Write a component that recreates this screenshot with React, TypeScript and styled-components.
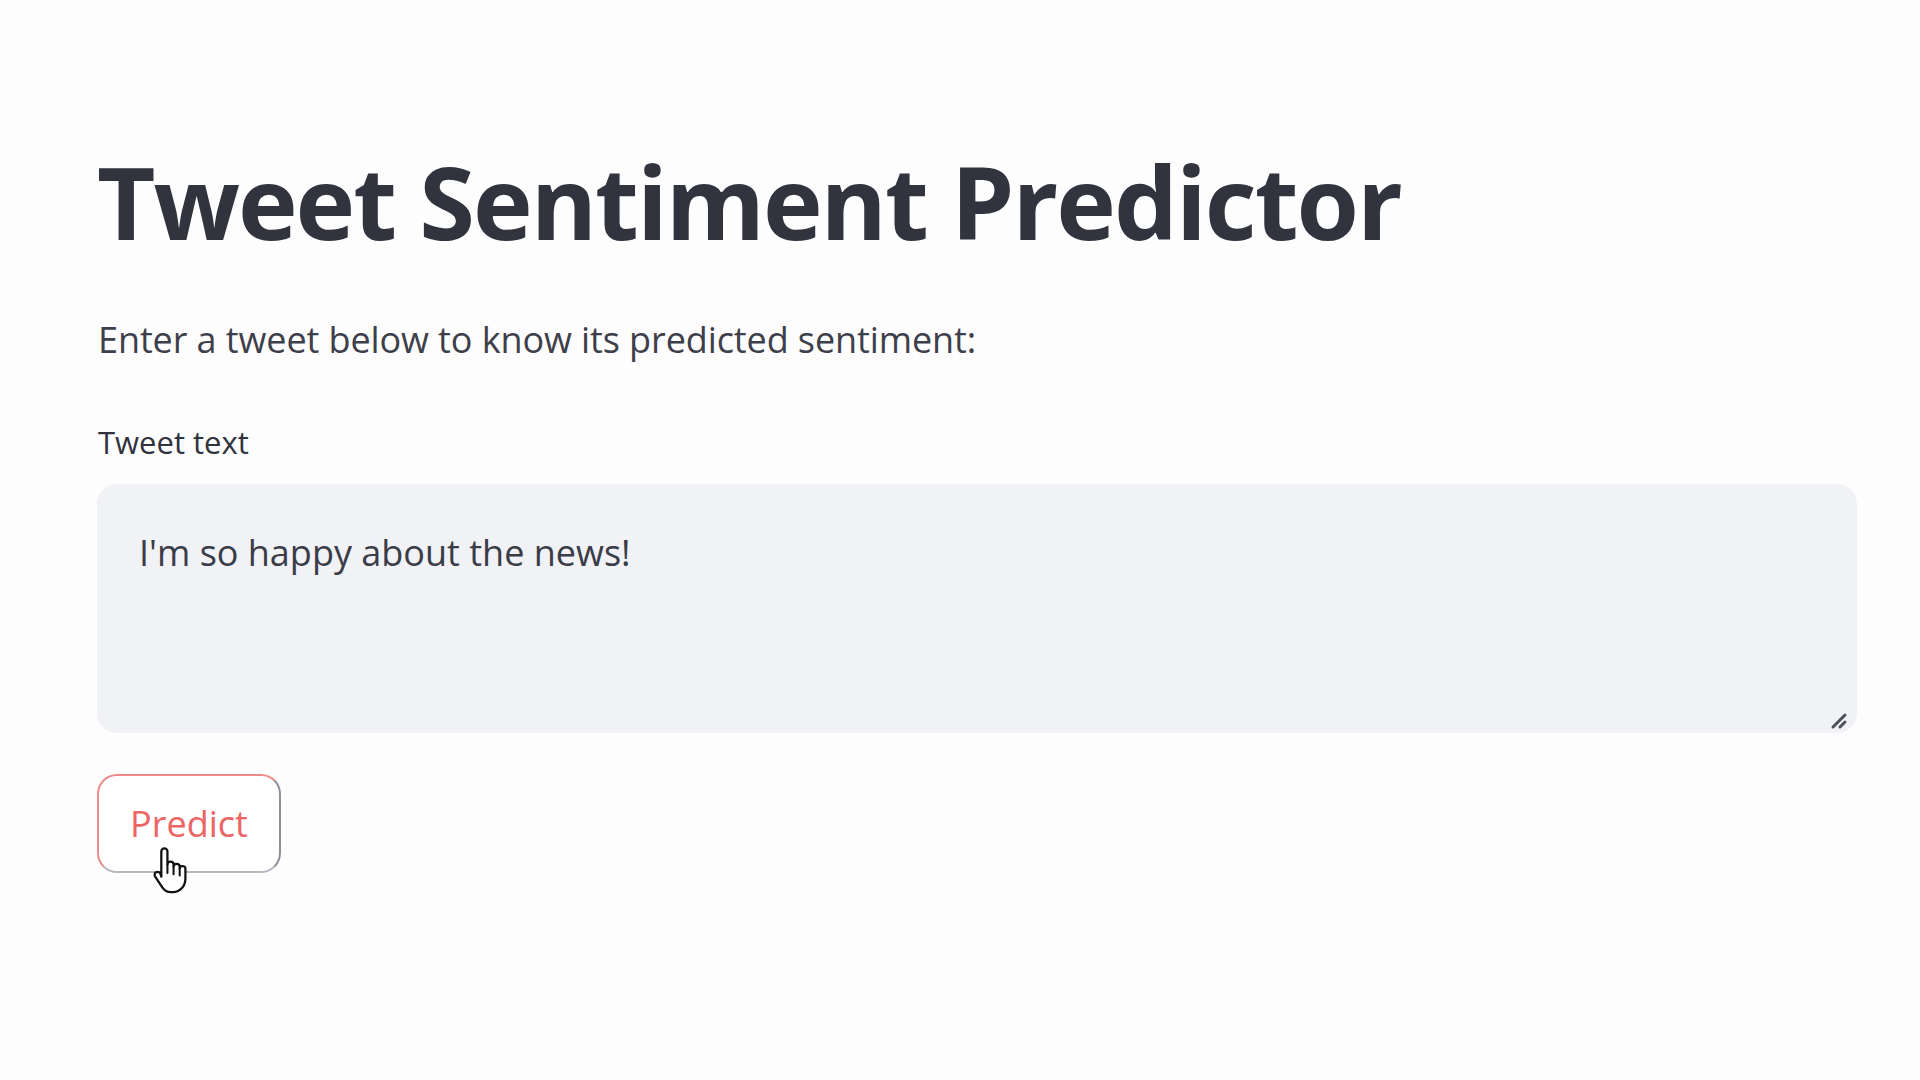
import React from "react";
import styled, { createGlobalStyle } from "styled-components";

const GlobalStyle = createGlobalStyle`
  html, body {
    margin: 0;
    padding: 0;
    background: #fdfdfd;
  }
  body {
    font-family: "Open Sans", "Noto Sans", sans-serif;
    color: #31333f;
  }
`;

const Main = styled.main`
  display: flex;
  flex-direction: column;
  align-items: stretch;
  padding: 141px 63px 0 97px;
  min-height: 1080px;
  box-sizing: border-box;
`;

const Title = styled.h1`
  margin: 0 0 47px 0;
  font-family: "Open Sans", sans-serif;
  font-weight: 700;
  font-size: 101px;
  line-height: 120px;
  letter-spacing: -2px;
  color: #31333f;
`;

const Lead = styled.p`
  margin: 0 0 50px 1px;
  font-size: 36px;
  line-height: 64px;
  letter-spacing: -0.1px;
  color: #3d3f4a;
`;

const Label = styled.label`
  display: block;
  margin: 0 0 22px 1px;
  font-size: 31px;
  line-height: 40px;
  color: #31333f;
`;

const AreaWrap = styled.div`
  position: relative;
  height: 249px;
  margin-bottom: 41px;
`;

const TextArea = styled.textarea`
  display: block;
  width: 100%;
  height: 100%;
  box-sizing: border-box;
  border: none;
  outline: none;
  resize: none;
  border-radius: 20px;
  background: #f0f2f6;
  padding: 37px 40px 0 42px;
  font-family: "Open Sans", sans-serif;
  font-size: 36px;
  line-height: 64px;
  color: #3a3c47;
`;

const Grip = styled.svg`
  position: absolute;
  right: 5px;
  bottom: 1px;
  width: 24px;
  height: 24px;
`;

const ButtonRow = styled.div`
  position: relative;
  display: flex;
`;

const PredictButton = styled.button`
  width: 184px;
  height: 99px;
  box-sizing: border-box;
  border-radius: 20px;
  border: 2px solid;
  border-color: #f08a8a #8e8f98 #b8b9c0 #f08a8a;
  background: #ffffff;
  font-family: "Open Sans", sans-serif;
  font-size: 36px;
  color: #ec6464;
  cursor: pointer;
  padding: 0 0 0 0;
`;

const Cursor = styled.svg`
  position: absolute;
  left: 55px;
  top: 72px;
  width: 37px;
  height: 49px;
  pointer-events: none;
`;

export default function App() {
  return (
    <>
      <GlobalStyle />
      <Main>
        <Title>Tweet Sentiment Predictor</Title>
        <Lead>Enter a tweet below to know its predicted sentiment:</Lead>
        <Label htmlFor="tweet">Tweet text</Label>
        <AreaWrap>
          <TextArea id="tweet" defaultValue="I'm so happy about the news!" />
          <Grip viewBox="0 0 24 24">
            <line x1="5" y1="19" x2="17" y2="7" stroke="#4f5058" strokeWidth="3" strokeLinecap="round" />
            <line x1="12" y1="19" x2="17" y2="14" stroke="#4f5058" strokeWidth="3" strokeLinecap="round" />
          </Grip>
        </AreaWrap>
        <ButtonRow>
          <PredictButton>Predict</PredictButton>
          <Cursor viewBox="0 0 18 24">
            <path
              d="M6 1.2c0.8 0 1.5 0.7 1.5 1.5V9c0-0.8 0.7-1.3 1.5-1.3s1.5 0.5 1.5 1.3V10c0-0.8 0.7-1.3 1.5-1.3s1.5 0.5 1.5 1.3V11c0-0.8 0.7-1.2 1.4-1.2s1.4 0.5 1.4 1.2V16c0 3.5-2.5 6.6-6 6.6H9.2c-2 0-3.3-1-4.3-2.5L1.5 15c-0.5-0.8-0.3-1.7 0.4-2.1c0.7-0.4 1.6-0.2 2.1 0.5L4.5 15V2.7c0-0.8 0.7-1.5 1.5-1.5Z"
              fill="#ffffff"
              stroke="#111111"
              strokeWidth="1.1"
              strokeLinejoin="round"
            />
            <path d="M7.5 9v4.2M10.5 10v3.8M13.5 11v3.4" stroke="#111111" strokeWidth="1" strokeLinecap="round" />
          </Cursor>
        </ButtonRow>
      </Main>
    </>
  );
}
